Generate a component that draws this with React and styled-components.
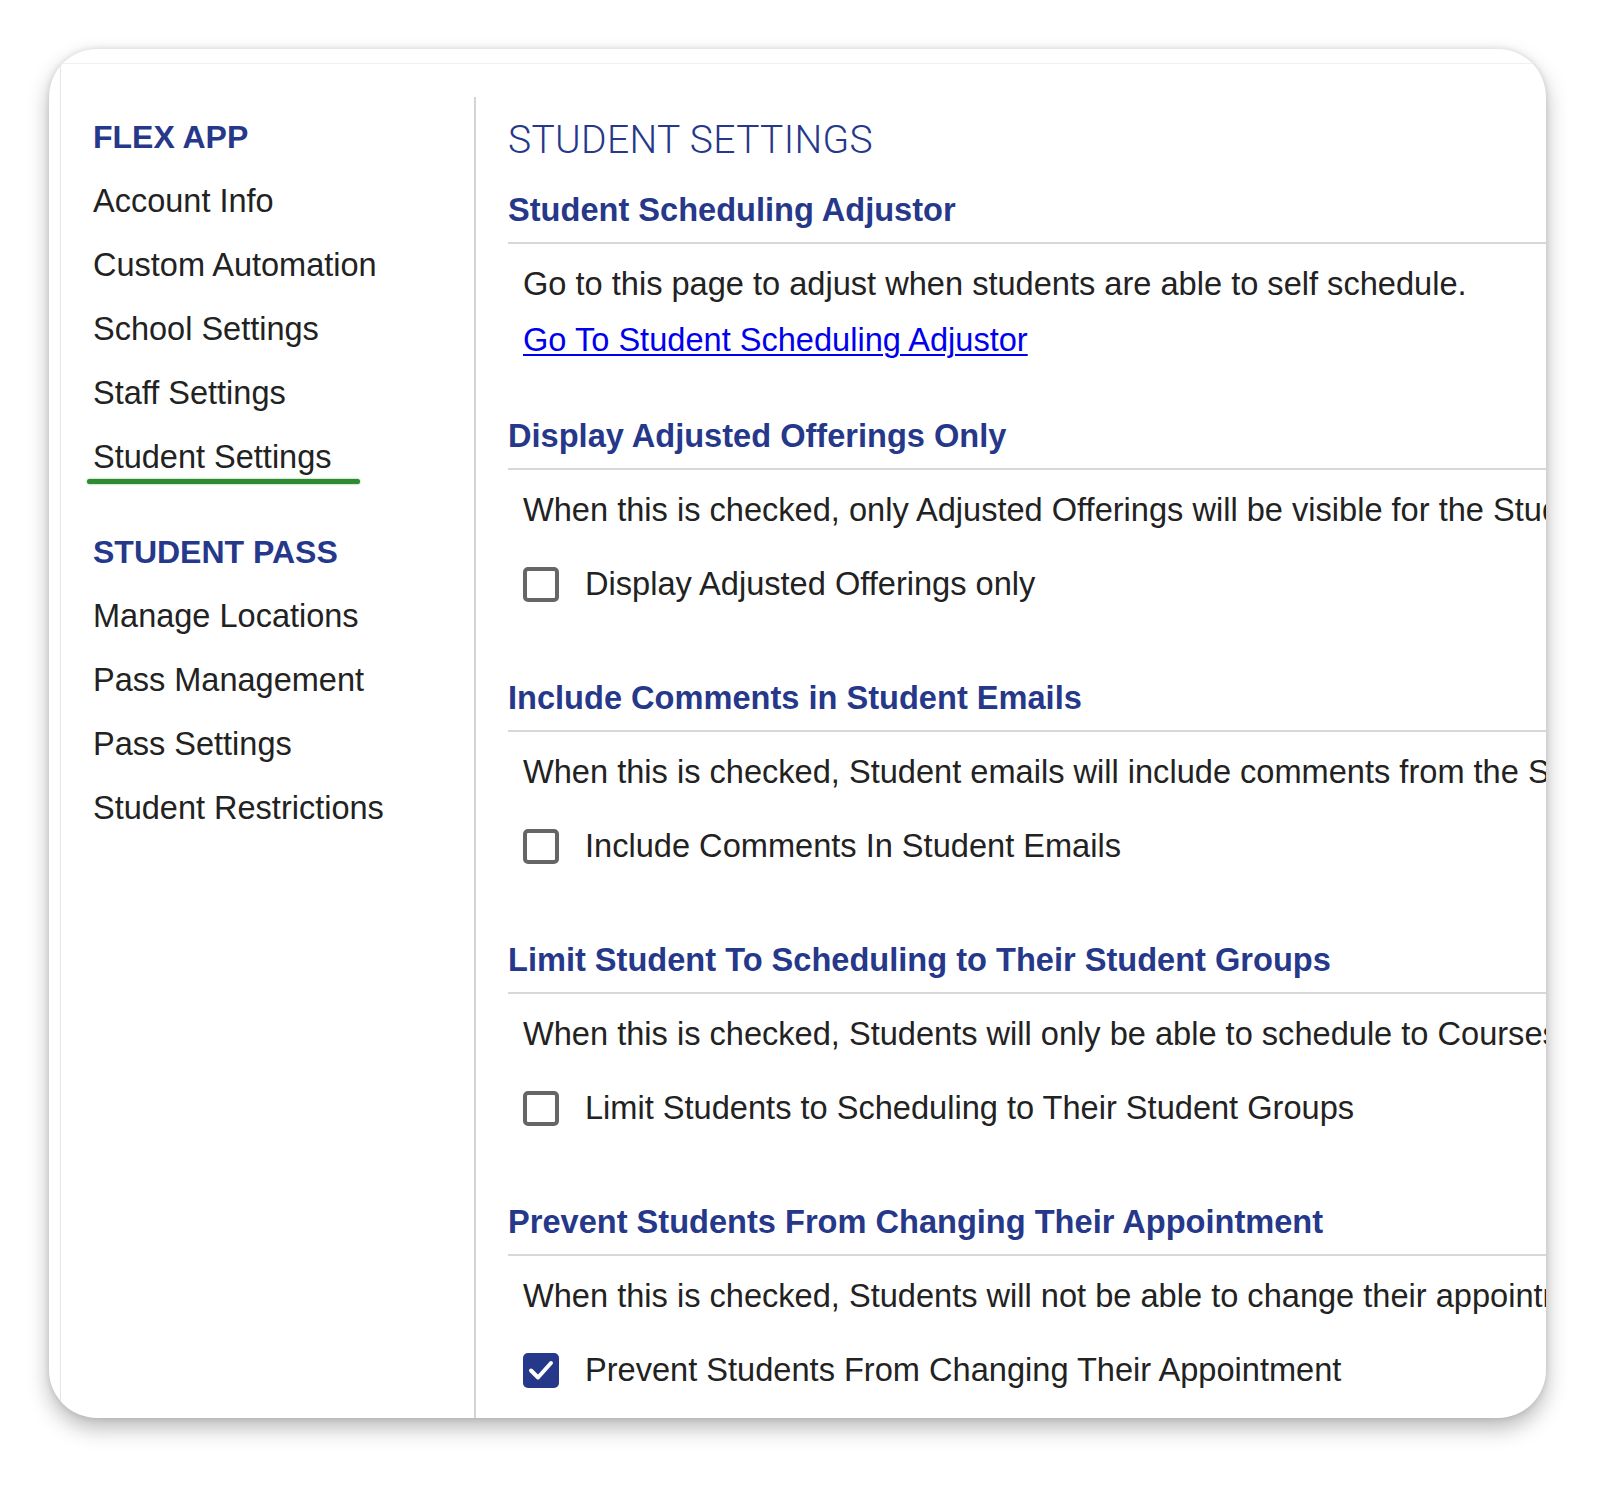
import React from "react";
import styled, { createGlobalStyle } from "styled-components";

const Global = createGlobalStyle`
  html, body { margin: 0; padding: 0; background: #ffffff; }
  body { font-family: "Liberation Sans", Arial, Helvetica, sans-serif; color: #222; }
  * { box-sizing: border-box; }
`;

const NAVY = "#26388a";
const FS = "32.6px";

const Page = styled.div`
  padding: 49px 0 0 49px;
  width: 1606px;
  height: 1499px;
`;

const Card = styled.div`
  width: 1497px;
  height: 1369px;
  border-radius: 48px;
  background: #fff;
  overflow: hidden;
  box-shadow: 0 10px 22px rgba(0, 0, 0, 0.28), 0 0 6px rgba(0, 0, 0, 0.12);
`;

const Frame = styled.div`
  margin: 14px 0 0 11px;
  height: calc(100% - 14px);
  border-top: 1px solid #f0f0f0;
  border-left: 1px solid #e6e6e6;
  padding-top: 33px;
  display: flex;
`;

const Sidebar = styled.nav`
  width: 415px;
  flex: none;
  border-right: 2px solid #d4d4d4;
  padding: 8px 0 0 32px;
  display: flex;
  flex-direction: column;
`;

const Group = styled.div`
  display: flex;
  flex-direction: column;
  & + & { margin-top: 31px; }
`;

const GroupTitle = styled.div`
  font-size: 32px;
  font-weight: 700;
  line-height: 64px;
  color: ${NAVY};
`;

const NavItem = styled.div`
  position: relative;
  font-size: 32.5px;
  line-height: 64px;
  color: #222;
  white-space: nowrap;
  ${(p) =>
    p.$active &&
    `
    &::after {
      content: "";
      position: absolute;
      left: -6px;
      width: 273px;
      bottom: 5px;
      height: 5px;
      border-radius: 3px;
      background: #2f8b30;
      box-shadow: 0 0 2px rgba(47, 139, 48, 0.7);
    }
  `}
`;

const Main = styled.main`
  flex: 1;
  min-width: 0;
  padding: 21px 0 0 32px;
  display: flex;
  flex-direction: column;
`;

const Title = styled.h1`
  margin: 0 0 28px;
  font-family: Roboto, "Liberation Sans", sans-serif;
  font-weight: 300;
  font-size: 39px;
  line-height: 44px;
  color: ${NAVY};
  letter-spacing: 0.35px;
`;

const Section = styled.section`
  margin-bottom: 56px;
`;

const SectionHeader = styled.h2`
  margin: 0;
  font-size: ${FS};
  font-weight: 700;
  line-height: 40px;
  color: ${NAVY};
  padding-bottom: 12px;
  border-bottom: 2px solid #d8d8d8;
  white-space: nowrap;
`;

const Body = styled.div`
  padding-left: 15px;
`;

const Desc = styled.p`
  margin: 20px 0 0;
  font-size: ${FS};
  line-height: 40px;
  color: #222;
  white-space: nowrap;
`;

const Link = styled.a`
  display: block;
  margin-top: 16px;
  font-size: ${FS};
  line-height: 40px;
  color: #0000ee;
  text-decoration: underline;
  text-underline-offset: 3px;
  text-decoration-thickness: 2px;
  white-space: nowrap;
`;

const CheckRow = styled.label`
  display: flex;
  align-items: center;
  gap: 26px;
  height: 40px;
  margin: 34px 0 18px;
  font-size: ${FS};
  color: #222;
  white-space: nowrap;
`;

const Box = styled.span`
  flex: none;
  width: 36px;
  height: 35px;
  border-radius: 5px;
  border: ${(p) => (p.$checked ? "none" : "4px solid #666")};
  background: ${(p) => (p.$checked ? NAVY : "#fff")};
  display: flex;
  align-items: center;
  justify-content: center;
`;

const Check = () => (
  <svg width="26" height="22" viewBox="0 0 26 22" fill="none">
    <path d="M3 11.5 L10 18.5 L23 4" stroke="#fff" strokeWidth="4" strokeLinecap="round" strokeLinejoin="round" />
  </svg>
);

const Checkbox = ({ checked, label }) => (
  <CheckRow>
    <Box $checked={checked}>{checked && <Check />}</Box>
    <span>{label}</span>
  </CheckRow>
);

const sections = [
  {
    title: "Display Adjusted Offerings Only",
    desc: "When this is checked, only Adjusted Offerings will be visible for the Students.",
    label: "Display Adjusted Offerings only",
    checked: false,
  },
  {
    title: "Include Comments in Student Emails",
    desc: "When this is checked, Student emails will include comments from the Staff.",
    label: "Include Comments In Student Emails",
    checked: false,
  },
  {
    title: "Limit Student To Scheduling to Their Student Groups",
    desc: "When this is checked, Students will only be able to schedule to Courses in their groups.",
    label: "Limit Students to Scheduling to Their Student Groups",
    checked: false,
  },
  {
    title: "Prevent Students From Changing Their Appointment",
    desc: "When this is checked, Students will not be able to change their appointment.",
    label: "Prevent Students From Changing Their Appointment",
    checked: true,
  },
];

export default function App() {
  return (
    <>
      <Global />
      <Page>
        <Card>
          <Frame>
            <Sidebar>
              <Group>
                <GroupTitle>FLEX APP</GroupTitle>
                <NavItem>Account Info</NavItem>
                <NavItem>Custom Automation</NavItem>
                <NavItem>School Settings</NavItem>
                <NavItem>Staff Settings</NavItem>
                <NavItem $active>Student Settings</NavItem>
              </Group>
              <Group>
                <GroupTitle>STUDENT PASS</GroupTitle>
                <NavItem>Manage Locations</NavItem>
                <NavItem>Pass Management</NavItem>
                <NavItem>Pass Settings</NavItem>
                <NavItem>Student Restrictions</NavItem>
              </Group>
            </Sidebar>
            <Main>
              <Title>STUDENT SETTINGS</Title>
              <Section>
                <SectionHeader>Student Scheduling Adjustor</SectionHeader>
                <Body>
                  <Desc>Go to this page to adjust when students are able to self schedule.</Desc>
                  <Link href="#">Go To Student Scheduling Adjustor</Link>
                </Body>
              </Section>
              {sections.map((s) => (
                <Section key={s.title}>
                  <SectionHeader>{s.title}</SectionHeader>
                  <Body>
                    <Desc>{s.desc}</Desc>
                    <Checkbox checked={s.checked} label={s.label} />
                  </Body>
                </Section>
              ))}
            </Main>
          </Frame>
        </Card>
      </Page>
    </>
  );
}
